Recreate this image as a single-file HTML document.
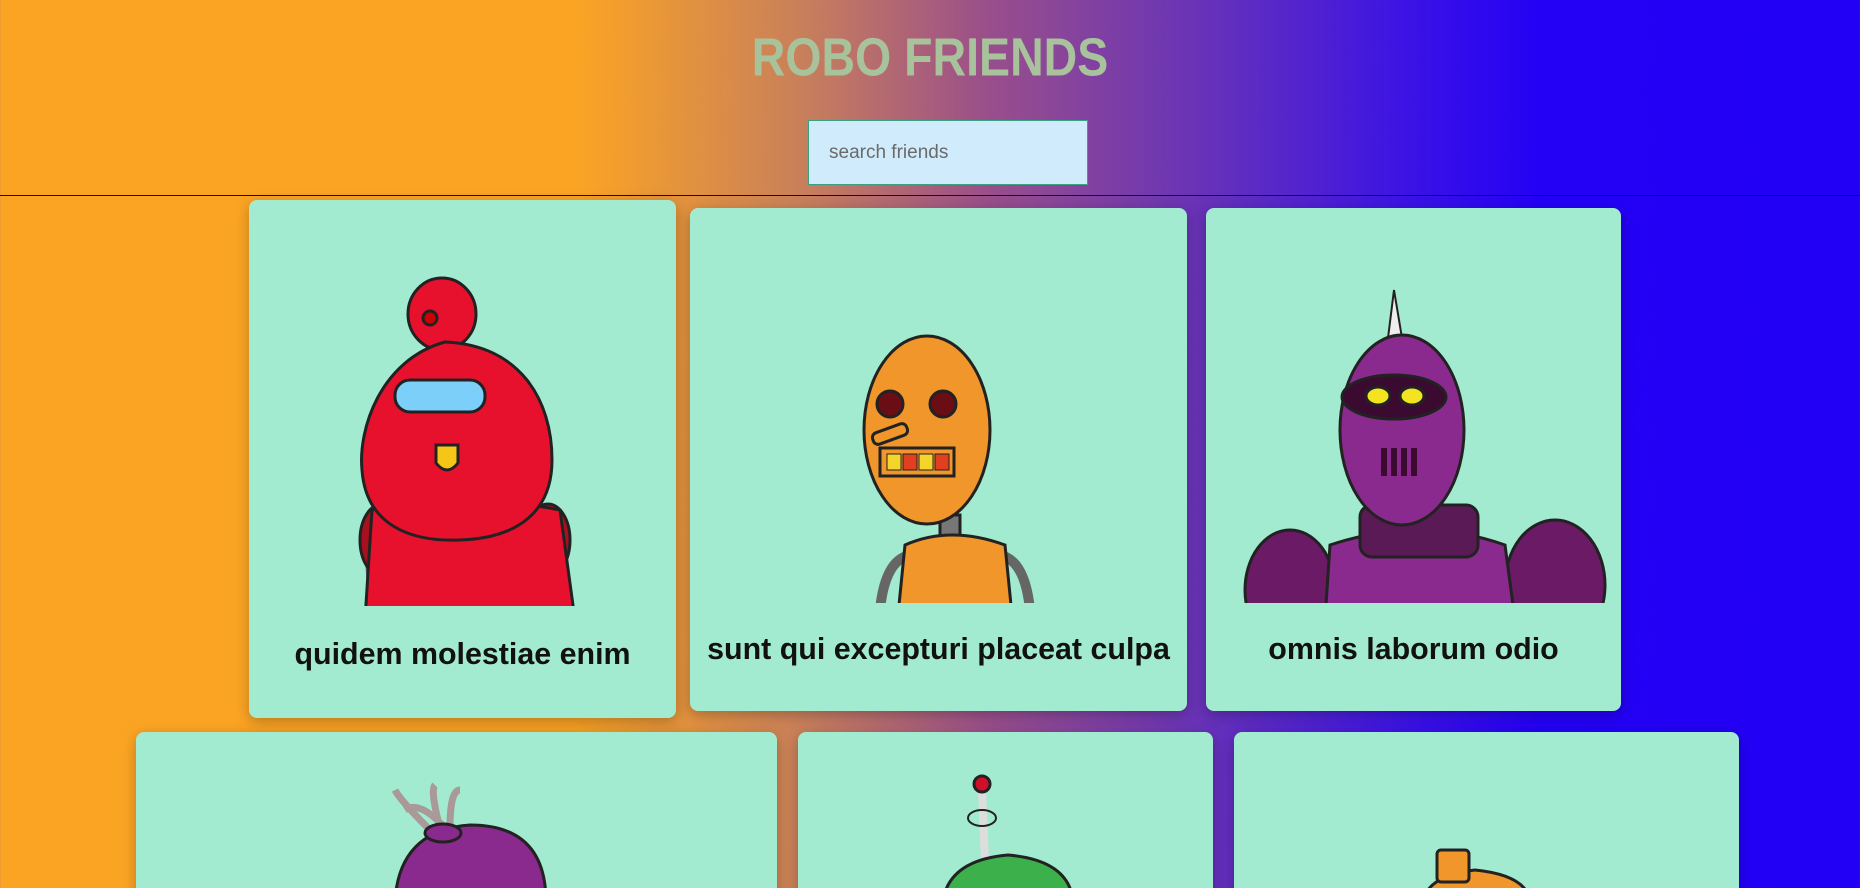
<!DOCTYPE html>
<html><head><meta charset="utf-8"><style>
*{margin:0;padding:0;box-sizing:border-box}
html,body{width:1860px;height:888px;overflow:hidden}
body{background:linear-gradient(90deg,#fba424 0%,#fba424 31%,#c9805a 43%,#9a4f8a 53%,#6a34b6 64%,#3a12e6 76%,#2400f5 83%,#2200f5 100%);font-family:"Liberation Sans",sans-serif;position:relative}
h1{position:absolute;top:26px;left:0;width:1860px;text-align:center;font-size:50px;font-weight:900;color:#a8c29c;letter-spacing:0px;transform:scale(0.93,1.08);transform-origin:center top;font-family:"Liberation Sans",sans-serif}
.search{position:absolute;left:808px;top:120px;width:280px;height:65px;background:#d0ecfc;border:1px solid #3aa080;font-size:19px;color:#6a6a6a;padding:21px 0 0 20px}
.line{position:absolute;left:0;top:195px;width:1860px;height:1px;background:#111}
.card{position:absolute;background:#a3ebd0;border-radius:8px;box-shadow:0 4px 14px rgba(0,0,0,.25)}
.name{position:absolute;width:100%;text-align:center;font-weight:bold;font-size:30.4px;color:#111}
svg{position:absolute;left:0;top:0}
</style></head><body>
<h1>ROBO FRIENDS</h1>
<div class="search">search friends</div>
<div class="line"></div>
<div class="card" style="left:249px;top:200px;width:427px;height:518px"><div class="name" style="top:437px">quidem molestiae enim</div></div>
<div class="card" style="left:690px;top:208px;width:497px;height:503px"><div class="name" style="top:424px">sunt qui excepturi placeat culpa</div></div>
<div class="card" style="left:1206px;top:208px;width:415px;height:503px"><div class="name" style="top:424px">omnis laborum odio</div></div>
<div class="card" style="left:136px;top:732px;width:641px;height:200px"></div>
<div class="card" style="left:798px;top:732px;width:415px;height:200px"></div>
<div class="card" style="left:1234px;top:732px;width:505px;height:200px"></div>
<svg width="1860" height="888" viewBox="0 0 1860 888">
<defs>
<clipPath id="c1"><rect x="249" y="200" width="427" height="406"/></clipPath>
<clipPath id="c2"><rect x="690" y="208" width="497" height="395"/></clipPath>
<clipPath id="c3"><rect x="1206" y="208" width="415" height="395"/></clipPath>
</defs>
<g stroke="#222" stroke-width="3">
<g clip-path="url(#c1)">
<path d="M372 560 L378 640 M560 560 L566 640" stroke="#666" stroke-width="14"/>
<ellipse cx="382" cy="540" rx="22" ry="36" fill="#a8101e"/>
<ellipse cx="548" cy="540" rx="22" ry="36" fill="#a8101e"/>
<path d="M372 510 Q460 490 560 510 L575 620 L365 620 Z" fill="#e8112d"/>
<ellipse cx="442" cy="314" rx="34" ry="36" fill="#e8112d"/>
<circle cx="430" cy="318" r="7" fill="#c00"/>
<path d="M445 342 C380 360 358 430 362 470 C366 525 410 542 460 540 C520 538 552 510 552 460 C552 400 520 345 445 342 Z" fill="#e8112d"/>
<rect x="395" y="380" width="90" height="32" rx="15" fill="#7ccff8"/>
<path d="M436 445 h22 v18 q-11 14 -22 0 Z" fill="#f5c518"/>
</g>
<g clip-path="url(#c2)">
<path d="M880 610 Q885 560 910 555 M1030 610 Q1025 560 1000 555" fill="none" stroke="#666" stroke-width="10"/>
<rect x="940" y="515" width="20" height="45" fill="#777"/>
<path d="M905 545 Q950 525 1005 545 L1012 615 L898 615 Z" fill="#f0962b"/>
<ellipse cx="927" cy="430" rx="63" ry="94" fill="#f0962b"/>
<circle cx="890" cy="404" r="13" fill="#6b0d14"/>
<circle cx="943" cy="404" r="13" fill="#6b0d14"/>
<rect x="880" y="448" width="74" height="28" fill="#f0962b"/>
<rect x="887" y="454" width="14" height="16" fill="#f5d52b" stroke-width="1"/>
<rect x="903" y="454" width="14" height="16" fill="#e04020" stroke-width="1"/>
<rect x="919" y="454" width="14" height="16" fill="#f5d52b" stroke-width="1"/>
<rect x="935" y="454" width="14" height="16" fill="#e04020" stroke-width="1"/>
<rect x="872" y="428" width="36" height="12" rx="5" fill="#f0962b" transform="rotate(-20 890 434)"/>
</g>
<g clip-path="url(#c3)">
<ellipse cx="1290" cy="590" rx="45" ry="60" fill="#6b1a66"/>
<ellipse cx="1555" cy="585" rx="50" ry="65" fill="#6b1a66"/>
<path d="M1330 545 Q1420 515 1505 545 L1515 620 L1325 620 Z" fill="#8b2a8e"/>
<rect x="1360" y="505" width="118" height="52" rx="12" fill="#5a1a55"/>
<path d="M1388 338 L1394 290 L1402 338 Z" fill="#eee" stroke-width="2"/>
<ellipse cx="1402" cy="430" rx="62" ry="95" fill="#8b2a8e"/>
<ellipse cx="1394" cy="397" rx="52" ry="22" fill="#3a0a30"/>
<ellipse cx="1378" cy="396" rx="12" ry="9" fill="#f3e320"/>
<ellipse cx="1412" cy="396" rx="12" ry="9" fill="#f3e320"/>
<path d="M1384 448 v28 M1394 448 v28 M1404 448 v28 M1414 448 v28" stroke="#3a0a30" stroke-width="6"/>
</g>
<path d="M430 830 Q400 800 395 790 M440 828 Q430 790 435 785 M450 828 Q450 790 460 790 M445 828 Q420 800 405 810" fill="none" stroke="#a99" stroke-width="7"/>
<path d="M395 900 Q400 830 470 825 Q545 825 546 900 Z" fill="#8b2a8e"/>
<ellipse cx="443" cy="833" rx="18" ry="9" fill="#8b2a8e"/>
<line x1="982" y1="790" x2="985" y2="860" stroke="#ddd" stroke-width="8"/>
<circle cx="982" cy="784" r="8" fill="#d0102a"/>
<ellipse cx="982" cy="818" rx="14" ry="8" fill="none" stroke-width="2"/>
<path d="M943 900 Q950 860 1008 855 Q1068 860 1073 900 Z" fill="#3cb04a"/>
<path d="M1423 900 Q1430 875 1475 870 Q1525 875 1530 900 Z" fill="#f0962b"/>
<rect x="1437" y="850" width="32" height="32" rx="4" fill="#f0962b"/>
</g>
</svg>
</body></html>
